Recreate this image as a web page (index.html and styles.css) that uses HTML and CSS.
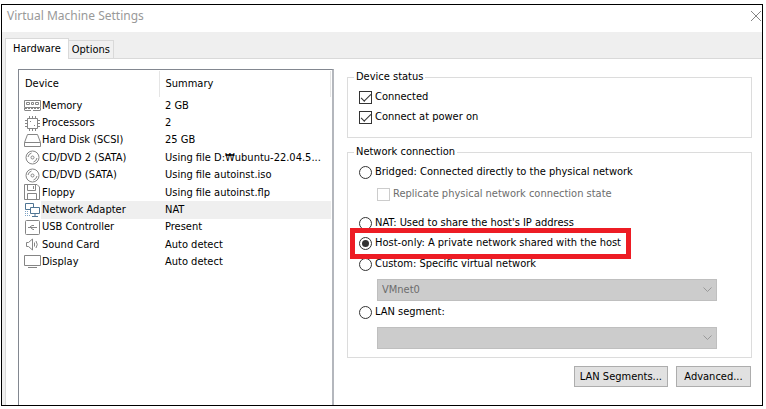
FILE: index.html
```html
<!DOCTYPE html>
<html lang="en">
<head>
<meta charset="utf-8">
<title>Virtual Machine Settings</title>
<link rel="stylesheet" href="styles.css">
</head>
<body>
<main class="window">
  <header class="titlebar">
    <h1>Virtual Machine Settings</h1>
    <button class="close" type="button" aria-label="Close"><svg width="12" height="12" viewBox="0 0 12 12"><path d="M1 1L11 11M11 1L1 11"/></svg></button>
  </header>
  <nav class="tabs" role="tablist">
    <button class="tab active" type="button" role="tab" aria-selected="true">Hardware</button>
    <button class="tab" type="button" role="tab" aria-selected="false">Options</button>
  </nav>
  <div class="panel">
    <section class="devices">
      <table>
        <thead><tr><th>Device</th><th>Summary</th></tr></thead>
        <tbody>
          <tr><td><span class="device"><svg viewBox="0 0 17 17"><path d="M.5 3.500H16.500V10.500H.5ZM.5 13.500H7M9 13.500H16.500M.5 11V13M16.500 11V13"/><path d="M1 11.500H16" stroke-dasharray="2 1"/><path d="M2.500 5.500H5.500V7.500H2.500ZM7.500 5.500H9.500V7.500H7.500ZM11.500 5.500H14.500V7.500H11.500Z"/></svg>Memory</span></td><td>2 GB</td></tr>
          <tr><td><span class="device"><svg viewBox="0 0 17 17"><path d="M3.500 3.500H13.500V13.500H3.500ZM5.500 1V3M8.500 1V3M11.500 1V3M5.500 14V16M8.500 14V16M11.500 14V16M1 5.500H3M1 8.500H3M1 11.500H3M14 5.500H16M14 8.500H16M14 11.500H16M6 6.500H7M10 10.500H11"/></svg>Processors</span></td><td>2</td></tr>
          <tr><td><span class="device"><svg viewBox="0 0 17 17"><path d="M3.500 2.500H13.500L16.500 10.500V14.500H.5V10.500ZM.5 10.500H16.500"/></svg>Hard Disk (SCSI)</span></td><td>25 GB</td></tr>
          <tr><td><span class="device"><svg viewBox="0 0 17 17"><circle cx="8.500" cy="8.500" r="6.500"/><circle cx="8.500" cy="8.500" r="1.500"/><path d="M4 8Q4.500 5 7.500 4M13 9Q12.500 12 9.500 13"/></svg>CD/DVD 2 (SATA)</span></td><td>Using file D:₩ubuntu-22.04.5...</td></tr>
          <tr><td><span class="device"><svg viewBox="0 0 17 17"><circle cx="8.500" cy="8.500" r="6.500"/><circle cx="8.500" cy="8.500" r="1.500"/><path d="M4 8Q4.500 5 7.500 4M13 9Q12.500 12 9.500 13"/></svg>CD/DVD (SATA)</span></td><td>Using file autoinst.iso</td></tr>
          <tr><td><span class="device"><svg viewBox="0 0 17 17"><path d="M.5 .5H13L15.500 3V15.500H.5ZM3.500 .5V6.500H11.500V.5M9.500 2V5M3.500 15.500V9.500H12.500V15.500"/></svg>Floppy</span></td><td>Using file autoinst.flp</td></tr>
          <tr class="selected"><td><span class="device"><svg class="network" viewBox="0 0 17 17"><path d="M1.500 1.500H9.500V7.500H1.500Z"/><path class="front" d="M6.500 5.500H15.500V11.500H6.500Z"/><path d="M11 12V14M8 14.500H14"/><path class="dots" d="M1 9.500H5M1 11.500H5M1 13.500H7"/></svg>Network Adapter</span></td><td>NAT</td></tr>
          <tr><td><span class="device"><svg viewBox="0 0 17 17"><rect x="1.500" y="1.500" width="14" height="14" rx="1"/><path d="M4 8.500H13M6 8L8 6.500H10M7 9L9 10.500H10"/></svg>USB Controller</span></td><td>Present</td></tr>
          <tr><td><span class="device"><svg viewBox="0 0 17 17"><path d="M2.500 6.500H4.500L8.500 3V14L4.500 10.500H2.500ZM10.500 6.500V10.500M12 5Q14.500 8.500 12 12"/></svg>Sound Card</span></td><td>Auto detect</td></tr>
          <tr><td><span class="device"><svg viewBox="0 0 17 17"><path d="M.5 1.500H16.500V11.500H.5ZM4 13.500H13"/></svg>Display</span></td><td>Auto detect</td></tr>
        </tbody>
      </table>
    </section>
    <section class="settings">
      <fieldset class="status">
        <legend>Device status</legend>
        <label class="option"><input type="checkbox" checked>Connected</label>
        <label class="option"><input type="checkbox" checked>Connect at power on</label>
      </fieldset>
      <fieldset class="connection">
        <legend>Network connection</legend>
        <label class="option"><input type="radio" name="net">Bridged: Connected directly to the physical network</label>
        <label class="option nested"><input type="checkbox" disabled>Replicate physical network connection state</label>
        <label class="option"><input type="radio" name="net">NAT: Used to share the host's IP address</label>
        <label class="option marked"><input type="radio" name="net" checked>Host-only: A private network shared with the host</label>
        <label class="option"><input type="radio" name="net">Custom: Specific virtual network</label>
        <div class="picker"><select aria-label="Virtual network" disabled><option>VMnet0</option></select><svg width="9" height="6" viewBox="0 0 9 6"><path d="M.5 .5L4.500 4.500L8.500 .5"/></svg></div>
        <label class="option"><input type="radio" name="net">LAN segment:</label>
        <div class="picker"><select aria-label="LAN segment" disabled><option></option></select><svg width="9" height="6" viewBox="0 0 9 6"><path d="M.5 .5L4.500 4.500L8.500 .5"/></svg></div>
      </fieldset>
      <div class="actions">
        <button type="button">LAN Segments...</button>
        <button type="button">Advanced...</button>
      </div>
    </section>
  </div>
</main>
</body>
</html>
```
FILE: styles.css
```css
*, *::before, *::after { box-sizing: border-box; }
body {
  margin: 0;
  padding: 4px 3px 3px 1px;
  height: 100vh;
  background: #fff;
  color: #000;
  font: 11px/16px "DejaVu Sans Condensed", "Noto Sans CJK KR", sans-serif;
}
button, select, input { font: inherit; color: inherit; margin: 0; }
svg { fill: none; stroke: #858585; }
.window {
  display: flex;
  flex-direction: column;
  height: 100%;
  border: 1px solid #000;
  background: #efefef;
  overflow: hidden;
}
.titlebar {
  display: flex;
  flex: none;
  justify-content: space-between;
  align-items: center;
  height: 27px;
  padding-left: 5px;
  padding-bottom: 5px;
  background: #fff;
}
h1 { margin: 0; font: 12px/20px "Noto Sans", "Noto Sans CJK KR", sans-serif; color: #999; }
.close { display: flex; padding: 0; border: 0; background: none; }
.tabs {
  display: flex;
  flex: none;
  align-items: flex-end;
  height: 26px;
  padding-left: 3px;
}
.tab {
  height: 18px;
  padding: 0 3px;
  border: 1px solid #d9d9d9;
  border-left: 0;
  border-bottom: 0;
  background: #f0f0f0;
}
.tab.active {
  position: relative;
  z-index: 1;
  height: 21px;
  margin-bottom: -1px;
  padding: 0 7px;
  border-left: 1px solid #d9d9d9;
  background: #fff;
}
.panel {
  display: grid;
  grid-template-columns: minmax(0, 316fr) minmax(0, 405fr);
  flex: 1;
  min-height: 0;
  gap: 13px;
  margin-left: 3px;
  padding: 10px 10px 0 12px;
  border: 1px solid #d9d9d9;
  border-right: 0;
  border-bottom: 0;
  background: #fff;
}
.devices {
  border: 1px solid #828790;
  border-right: 2px solid #b4b7bd;
  border-bottom: 0;
  padding: 1px 1px 0 5px;
}
table { width: 100%; height: 200px; border-collapse: collapse; table-layout: fixed; }
th, td { padding: 0 0 0 6px; text-align: left; font-weight: normal; line-height: 16px; white-space: nowrap; }
th { height: 26px; border-right: 1px solid #e5e5e5; }
th:first-child { width: 135px; padding-left: 1px; }
td:first-child { padding-left: 0; }
.device { display: flex; align-items: center; gap: 1px; height: 16px; }
.device svg { flex: none; width: 17px; height: 17px; }
.selected { background: linear-gradient(to right, transparent 17px, #efefef 17px); }
.device .network { stroke: #4f7594; }
.front { fill: #fff; }
.dots { stroke: #7fa3c4; stroke-dasharray: 1 1; }
fieldset {
  display: flex;
  flex-direction: column;
  min-width: 0;
  margin: 0;
  padding: 4px 34px 0 11px;
  border: 1px solid #dcdcdc;
}
legend { margin-left: -5px; padding: 0 2px; }
.status { height: 69px; }
.status .option { margin-bottom: 4px; }
.connection { margin-top: 6px; padding-bottom: 5px; }
.option { display: flex; align-items: center; gap: 3px; height: 16px; white-space: nowrap; }
input {
  appearance: none;
  flex: none;
  display: grid;
  place-items: center;
  width: 13px;
  height: 13px;
  border: 1px solid #333;
  background: #fff;
}
input[type="radio"] { border-radius: 50%; }
input[type="radio"]:checked::before { content: ""; width: 7px; height: 7px; border-radius: 50%; background: #333; }
input[type="checkbox"]:checked::before {
  content: "";
  width: 10px;
  height: 5px;
  border: solid #333;
  border-width: 0 0 1px 1px;
  transform: translateY(-1px) rotate(-45deg);
}
input:disabled { border-color: #ccc; }
.nested { margin: 6px 0 13px 18px; color: #6d6d6d; }
.marked { position: relative; margin: 4px 0 5px; }
.marked::after {
  content: "";
  position: absolute;
  left: -9px;
  top: -7px;
  width: 281px;
  height: 31px;
  border: 5px solid #ed1c24;
}
.picker { position: relative; margin: 7px 0 3px 18px; }
.picker select {
  display: block;
  appearance: none;
  width: 100%;
  height: 22px;
  padding: 0 4px;
  border: 1px solid #bfbfbf;
  border-radius: 0;
  background: #ccc;
  color: #6d6d6d;
  opacity: 1;
}
.picker svg { position: absolute; right: 5px; top: 8px; stroke: #999; }
.actions { display: flex; justify-content: flex-end; gap: 8px; margin-top: 8px; padding-right: 1px; }
.actions button { min-width: 75px; height: 21px; padding: 0 5px; border: 1px solid #adadad; background: #e1e1e1; line-height: 16px; }
```
